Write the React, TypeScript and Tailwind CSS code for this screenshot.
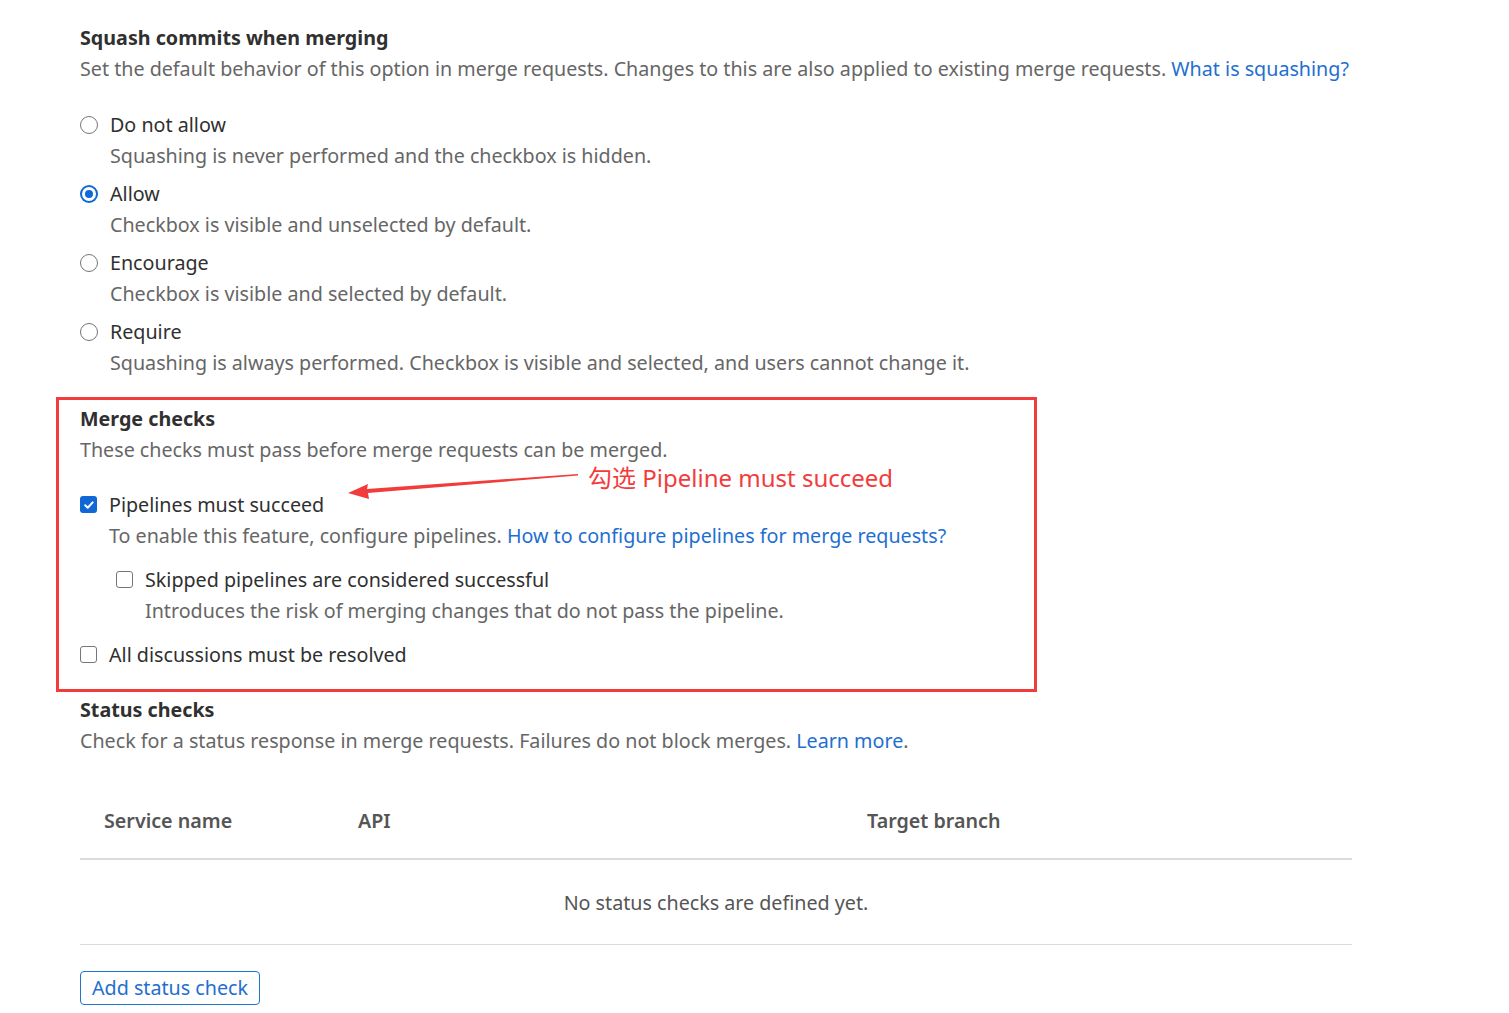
import React from 'react'

const font = { fontFamily: '"Noto Sans", "Noto Sans CJK SC", sans-serif' }

function Radio({ checked }: { checked?: boolean }) {
  return checked ? (
    <span className="mt-[6px] flex h-[18px] w-[18px] shrink-0 items-center justify-center rounded-full bg-[#1068d6]">
      <span className="h-[14px] w-[14px] rounded-full border-[3px] border-white bg-[#1068d6]" />
    </span>
  ) : (
    <span className="mt-[6px] h-[18px] w-[18px] shrink-0 rounded-full border-[1.5px] border-[#767676] bg-white" />
  )
}

function Checkbox({ checked }: { checked?: boolean }) {
  return checked ? (
    <span className="mt-[6px] flex h-[17px] w-[17px] shrink-0 items-center justify-center rounded-[3px] bg-[#1068d6]">
      <svg width="12" height="12" viewBox="0 0 12 12" fill="none">
        <path d="M2.2 6.3l2.5 2.5 5-5.4" stroke="white" strokeWidth="2" strokeLinecap="round" strokeLinejoin="round" />
      </svg>
    </span>
  ) : (
    <span className="mt-[6px] h-[17px] w-[17px] shrink-0 rounded-[3px] border-[1.5px] border-[#767676] bg-white" />
  )
}

function Option({ label, help, checked, kind }: { label: string; help?: React.ReactNode; checked?: boolean; kind: 'radio' | 'check' }) {
  return (
    <div className="flex gap-[12px]">
      {kind === 'radio' ? <Radio checked={checked} /> : <Checkbox checked={checked} />}
      <div>
        <div className="text-[19.7px] leading-[30px] text-[#303030]">{label}</div>
        {help && <div className="mt-[1px] text-[19.7px] leading-[30px] text-[#666]">{help}</div>}
      </div>
    </div>
  )
}

const squash = [
  { label: 'Do not allow', help: 'Squashing is never performed and the checkbox is hidden.' },
  { label: 'Allow', help: 'Checkbox is visible and unselected by default.', checked: true },
  { label: 'Encourage', help: 'Checkbox is visible and selected by default.' },
  { label: 'Require', help: 'Squashing is always performed. Checkbox is visible and selected, and users cannot change it.' },
]

export default function App() {
  return (
    <div className="min-h-[1013px] w-[1509px] bg-white pl-[80px] pt-[23px]" style={font}>
      <section>
        <h3 className="text-[19.7px] font-bold leading-[30px] text-[#303030]">Squash commits when merging</h3>
        <p className="text-[19.7px] leading-[32px] text-[#666]">
          Set the default behavior of this option in merge requests. Changes to this are also applied to existing merge requests.{' '}
          <a className="text-[#1f6fd0]">What is squashing?</a>
        </p>
        <div className="mt-[25px] flex flex-col gap-[8px]">
          {squash.map((o) => (
            <Option key={o.label} kind="radio" {...o} />
          ))}
        </div>
      </section>

      <div className="relative -ml-[24px] mt-[19px] w-[981px] border-[3px] border-[#f23c3c] pb-[19px] pl-[21px] pt-[4px]">
        <h3 className="text-[19.7px] font-bold leading-[30px] text-[#303030]">Merge checks</h3>
        <p className="text-[19.7px] leading-[32px] text-[#666]">These checks must pass before merge requests can be merged.</p>
        <div className="mt-[24px] flex flex-col gap-[14px]">
          <div>
            <Option
              kind="check"
              checked
              label="Pipelines must succeed"
              help={
                <>
                  To enable this feature, configure pipelines. <a className="text-[#1f6fd0]">How to configure pipelines for merge requests?</a>
                </>
              }
            />
            <div className="ml-[36px] mt-[14px]">
              <Option kind="check" label="Skipped pipelines are considered successful" help="Introduces the risk of merging changes that do not pass the pipeline." />
            </div>
          </div>
          <Option kind="check" label="All discussions must be resolved" />
        </div>

        <div className="absolute left-[289px] top-[63px] flex items-start">
          <svg width="232" height="28" viewBox="0 0 232 28" className="mt-[10px]">
            <path d="M0 20 L20 11 L19 16 L230 1 L230 2.5 L20 20 L21 26 Z" fill="#f23c3c" />
          </svg>
          <span className="ml-[8px] text-[24px] leading-[30px] text-[#f23c3c]">勾选 Pipeline must succeed</span>
        </div>
      </div>

      <section className="mt-[3px] w-[1272px]">
        <h3 className="text-[19.7px] font-bold leading-[30px] text-[#303030]">Status checks</h3>
        <p className="text-[19.7px] leading-[32px] text-[#666]">
          Check for a status response in merge requests. Failures do not block merges. <a className="text-[#1f6fd0]">Learn more</a>.
        </p>
        <div className="mt-[49px]">
          <div className="flex border-b-2 border-[#dbdbdb] pb-[22px] text-[19.7px] font-semibold leading-[30px] text-[#555]">
            <div className="w-[278px] pl-[24px]">Service name</div>
            <div className="w-[509px]">API</div>
            <div>Target branch</div>
          </div>
          <div className="border-b border-[#dbdbdb] pb-[26px] pt-[28px] text-center text-[19.7px] leading-[30px] text-[#555]">No status checks are defined yet.</div>
        </div>
        <button className="mt-[26px] rounded-[4px] border border-[#1f75cb] px-[11px] text-[19.7px] leading-[32px] text-[#1f6fd0]">Add status check</button>
      </section>
    </div>
  )
}
